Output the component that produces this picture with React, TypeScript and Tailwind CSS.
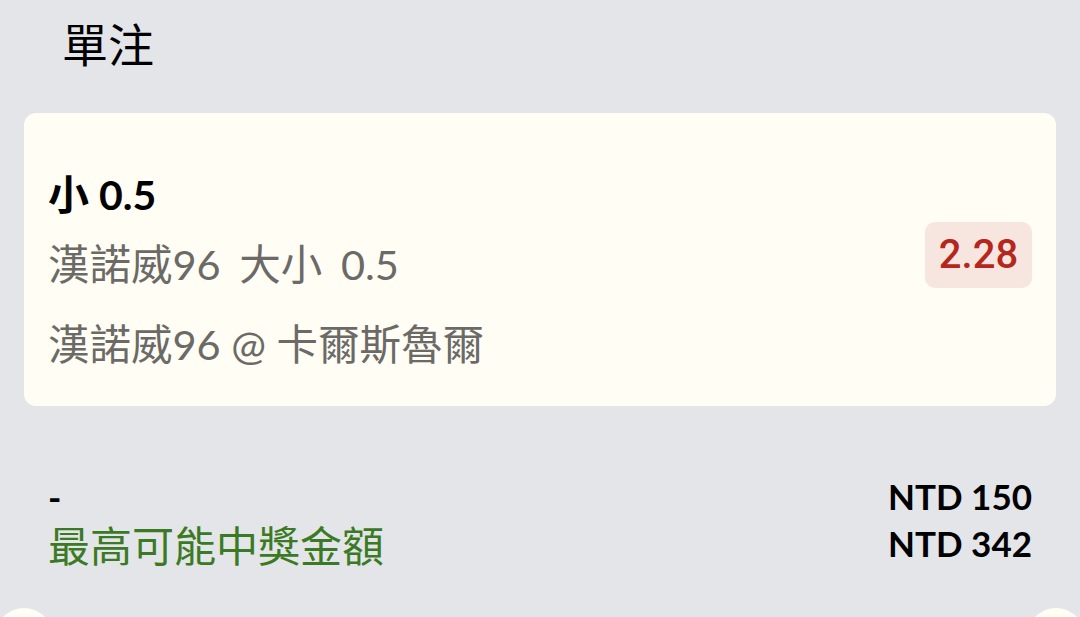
import React from 'react';

const latin = "font-['Lato','Noto_Sans_CJK_TC',sans-serif]";
const cjk = "font-['Noto_Sans_CJK_TC',sans-serif]";

export default function App() {
  return (
    <div className={`relative w-[1080px] h-[617px] overflow-hidden bg-[#e4e5e8] leading-none ${latin}`}>
      <div className="px-6">
        {/* header */}
        <div className="h-[92px] flex items-center pl-[38px] pb-[2px]">
          <h1 className="text-[46px] text-black font-normal">單注</h1>
        </div>

        {/* bet card */}
        <div className="mt-[21px] bg-[#fffdf4] rounded-xl flex justify-between px-6 pt-[59px] pb-[36px]">
          <div className="flex flex-col">
            <div className="h-[44px] flex items-center text-[41px] font-bold text-black">小 0.5</div>
            <div className="mt-[24px] h-[50px] flex items-center text-[41.5px] text-[#6b6a66] [word-spacing:8px]">漢諾威96 大小 0.5</div>
            <div className="mt-[30px] h-[50px] flex items-center text-[41.5px] text-[#6b6a66]">漢諾威96 @ 卡爾斯魯爾</div>
          </div>
          <div className="mt-[50px] self-start h-[66px] w-[107px] rounded-[10px] bg-[#f7e6df] flex items-center justify-center">
            <span className="font-['Roboto',sans-serif] text-[40px] font-medium text-[#b5271c]">2.28</span>
          </div>
        </div>

        {/* totals */}
        <div className="mt-[67px] px-6 flex justify-between">
          <div className="flex flex-col">
            <div className="h-[47px] flex items-center text-[36px] font-bold text-black">-</div>
            <div className={`h-[47px] flex items-center text-[42px] text-[#3b7a24] ${cjk}`}>最高可能中獎金額</div>
          </div>
          <div className="flex flex-col items-end">
            <div className="h-[47px] flex items-center text-[35px] font-bold text-black">NTD 150</div>
            <div className="h-[47px] flex items-center text-[35px] font-bold text-black">NTD 342</div>
          </div>
        </div>
      </div>

      {/* partially visible round buttons */}
      <div className="absolute left-[-5px] top-[608px] w-[58px] h-[58px] rounded-full bg-[#fffdf4]" />
      <div className="absolute left-[1027px] top-[608px] w-[58px] h-[58px] rounded-full bg-[#fffdf4]" />
    </div>
  );
}
